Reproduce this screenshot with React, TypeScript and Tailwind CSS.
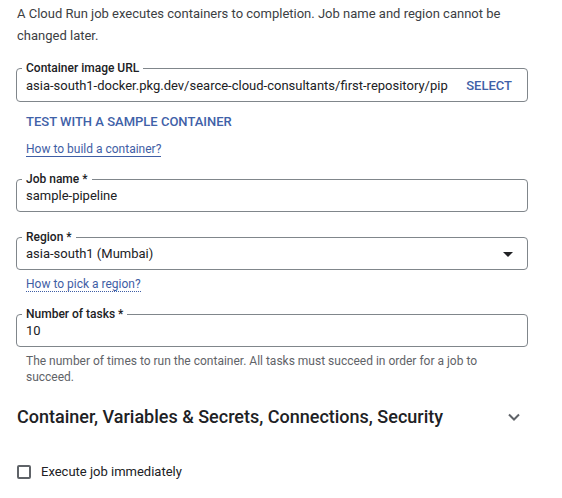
import React from "react";

function Field({ label, children }: { label: string; children: React.ReactNode }) {
  return (
    <fieldset className="rounded-[4px] border border-[#80868b] px-[9px] pb-[6px] pt-0 m-0 min-w-0">
      <legend className="-ml-[4px] px-[4px] text-[12px] leading-[16px] font-medium text-[#202124]">{label}</legend>
      {children}
    </fieldset>
  );
}

export default function App() {
  return (
    <div
      className="w-[562px] h-[498px] bg-white overflow-hidden"
      style={{ fontFamily: "Roboto, 'Noto Sans', Arial, sans-serif" }}
    >
      <div className="pl-[16px] pr-[34px]">
        <p className="ml-[1px] pt-[3px] text-[13px] leading-[22px] text-[#3c4043]">
          A Cloud Run job executes containers to completion. Job name and region cannot be changed later.
        </p>

        <div className="mt-[13px]">
          <Field label="Container image URL">
            <div className="flex items-center h-[19px]">
              <span className="flex-1 min-w-0 text-[13px] leading-[19px] text-[#202124] whitespace-nowrap overflow-hidden">
                asia-south1-docker.pkg.dev/searce-cloud-consultants/first-repository/pip
              </span>
              <span className="ml-[12px] mr-[6px] text-[13px] leading-[19px] font-medium text-[#3f61a8]">SELECT</span>
            </div>
          </Field>
        </div>

        <div className="ml-[10px] mt-[11px] text-[13px] leading-[18px] font-medium text-[#3f61a8]">
          TEST WITH A SAMPLE CONTAINER
        </div>

        <div className="ml-[10px] mt-[10px] text-[12px] leading-[16px]">
          <span className="text-[#3f5ea5] border-b border-[#3f5ea5]">How to build a container?</span>
        </div>

        <div className="mt-[14px]">
          <Field label="Job name *">
            <div className="text-[13px] leading-[18px] text-[#202124]">sample-pipeline</div>
          </Field>
        </div>

        <div className="mt-[17px]">
          <Field label="Region *">
            <div className="flex items-center h-[18px]">
              <span className="flex-1 text-[13px] leading-[18px] text-[#202124]">asia-south1 (Mumbai)</span>
              <svg width="10" height="5" viewBox="0 0 10 5" className="mr-[5px]">
                <path d="M0 0 L10 0 L5 5 Z" fill="#202124" />
              </svg>
            </div>
          </Field>
        </div>

        <div className="ml-[10px] mt-[6px] text-[12px] leading-[16px]">
          <span className="text-[#3f5ea5] border-b border-dotted border-[#3f5ea5]">How to pick a region?</span>
        </div>

        <div className="mt-[14px]">
          <Field label="Number of tasks *">
            <div className="text-[13px] leading-[18px] text-[#202124]">10</div>
          </Field>
        </div>

        <p className="ml-[10px] mt-[6px] text-[12px] leading-[16px] text-[#5f6368]">
          The number of times to run the container. All tasks must succeed in order for a job to succeed.
        </p>

        <div className="mt-[20px] flex items-center justify-between">
          <h2 className="ml-[1px] text-[18px] leading-[24px] font-medium text-[#202124]">
            Container, Variables &amp; Secrets, Connections, Security
          </h2>
          <svg width="12" height="8" viewBox="0 0 12 8" className="mr-[8px]">
            <path d="M1 1.5 L6 6.5 L11 1.5" fill="none" stroke="#5f6368" strokeWidth="2" />
          </svg>
        </div>

        <label className="mt-[33px] flex items-center gap-[10px] ml-[1px]">
          <span className="w-[14px] h-[14px] rounded-[2px] border-2 border-[#5f6368] bg-white" />
          <span className="text-[13px] leading-[20px] text-[#202124]">Execute job immediately</span>
        </label>
      </div>
    </div>
  );
}
